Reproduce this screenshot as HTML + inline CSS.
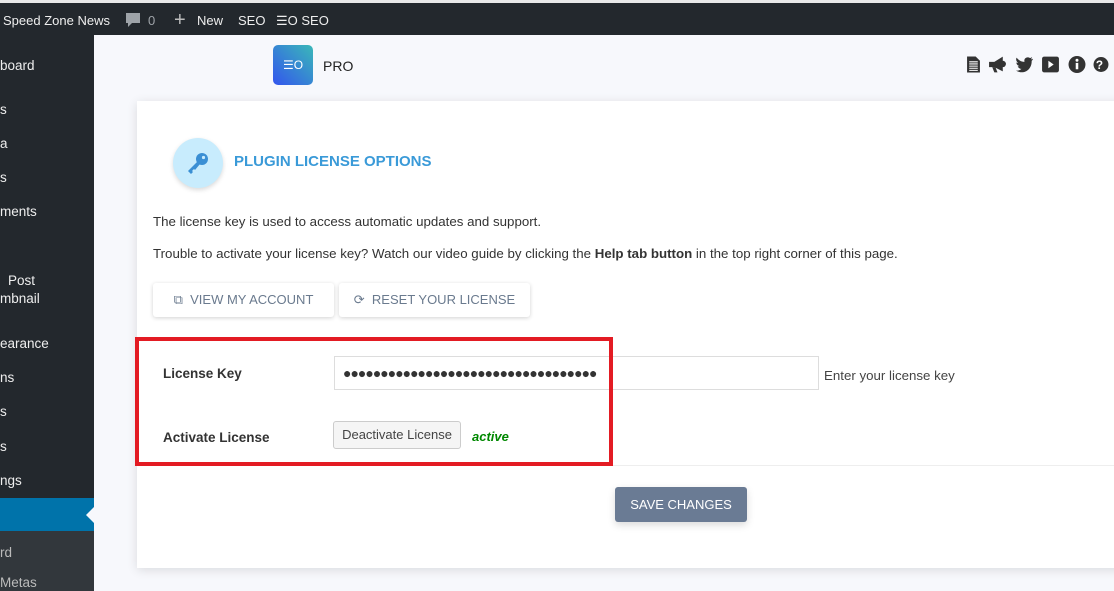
<!DOCTYPE html>
<html><head><meta charset="utf-8"><style>
*{box-sizing:border-box;margin:0;padding:0}
body{width:1114px;height:591px;overflow:hidden;background:#f7f8fc;font-family:"Liberation Sans",sans-serif;font-size:13px;color:#32373c;position:relative}
.abs{position:absolute}
#bar{left:0;top:0;width:1114px;height:35px;background:#23282d;border-top:3px solid #e8e8e8;color:#eee;font-size:13px}
#bar span{position:absolute;top:10px}
#side{left:0;top:35px;width:94px;height:556px;background:#23282d;color:#eee;font-size:13.5px}
#side div{position:absolute;left:0}
.card{left:137px;top:101px;width:990px;height:467px;background:#fff;box-shadow:0 2px 10px rgba(0,0,0,.12)}
.btn{background:#fff;box-shadow:0 1px 4px rgba(0,0,0,.18);border-radius:3px;color:#6a7a8e;font-size:13px;text-align:center;line-height:34px}
.lbl{color:#333;font-weight:bold;font-size:13.5px}
</style></head><body>
<div id="bar" class="abs">
<span style="left:3px">Speed Zone News</span>
<svg class="abs" style="left:125px;top:9px" width="16" height="16" viewBox="0 0 16 16"><path d="M1 1h14v10H7l-4 4v-4H1z" fill="#9ea3a8"/></svg>
<span style="left:148px;color:#9ea3a8">0</span>
<span style="left:174px;top:6px;font-size:20px;color:#bbb">+</span>
<span style="left:197px">New</span>
<span style="left:238px">SEO</span>
<span style="left:276px">☰O SEO</span>
</div>
<div id="side" class="abs">
<div style="top:23px">board</div>
<div style="top:67px">s</div>
<div style="top:101px">a</div>
<div style="top:135px">s</div>
<div style="top:169px">ments</div>
<div style="top:238px;left:8px">Post</div>
<div style="top:256px">mbnail</div>
<div style="top:301px">earance</div>
<div style="top:335px">ns</div>
<div style="top:369px">s</div>
<div style="top:404px">s</div>
<div style="top:438px">ngs</div>
<div style="top:463px;width:94px;height:33px;background:#0073aa"></div>
<div style="top:472px;left:86px;width:0;height:0;border-top:8px solid transparent;border-bottom:8px solid transparent;border-right:8px solid #f7f8fc"></div>
<div style="top:496px;width:94px;height:60px;background:#32373c"></div>
<div style="top:510px;color:#bbb">rd</div>
<div style="top:540px;color:#bbb">Metas</div>
</div>
<div class="abs" style="left:273px;top:45px;width:40px;height:40px;border-radius:5px;background:linear-gradient(225deg,#3ab8b8,#3355ee);color:#fff;font-size:12px;text-align:center;line-height:40px">☰O</div>
<div class="abs" style="left:323px;top:58px;font-size:14px;color:#222">PRO</div>
<div class="abs" style="left:966px;top:55px;font-size:16px;color:#333;letter-spacing:3px">
<svg width="15" height="19" viewBox="0 0 14 17"><path d="M1 1h8l4 4v11H1z" fill="#333"/><path d="M3 6h8M3 8h8M3 10h8M3 12h8M3 14h8" stroke="#fff" stroke-width="1"/></svg>
<svg width="19" height="19" viewBox="0 0 18 17"><path d="M1 6h5l8-5v14l-8-4H1z" fill="#333"/><circle cx="14" cy="8" r="3" fill="#333"/><path d="M4 11l2 5h3l-2-5" fill="#333"/></svg>
<svg width="19" height="19" viewBox="0 0 18 17"><path d="M17 3c-1 .5-1.5.5-2 .5 1-1 1-1.5 1.2-2-1 .5-1.5.8-2 .9C12 0.8 8 2 9 6 5.5 6 3 4 1.5 2 0.5 4 1.5 6 3 7c-.7 0-1.3-.2-1.700-.5 0 2 1.5 3.2 3 3.5-.6.2-1.2.2-1.7.1.5 1.5 2 2.5 3.5 2.5C4.5 14 2.5 14.5 1 14.3 8 18.5 16 14 15.8 5c.6-.5 1-1 1.2-2z" fill="#333"/></svg>
<svg width="19" height="19" viewBox="0 0 18 17"><rect x="1" y="1" width="16" height="15" rx="2" fill="#333"/><path d="M7 5l5 3.5L7 12z" fill="#fff"/></svg>
<svg width="18" height="19" viewBox="0 0 17 17"><circle cx="8.5" cy="8.5" r="8" fill="#333"/><rect x="7.3" y="7" width="2.4" height="6" fill="#fff"/><circle cx="8.5" cy="4.5" r="1.4" fill="#fff"/></svg>
<svg width="16" height="19" viewBox="0 0 15 17"><circle cx="7.5" cy="8.5" r="7" fill="#333"/><text x="7.5" y="12.5" font-size="11" font-weight="bold" fill="#fff" text-anchor="middle" font-family="Liberation Sans">?</text></svg>
</div>
<div class="card abs">
<div class="abs" style="left:36px;top:37px;width:50px;height:50px;border-radius:50%;background:#c8ecfd;box-shadow:0 2px 5px rgba(0,0,0,.15)">
<svg class="abs" style="left:12px;top:12px" width="26" height="26" viewBox="0 0 26 26"><circle cx="17" cy="9" r="6" fill="#3a8fd4"/><circle cx="18.5" cy="7.5" r="1.6" fill="#c8ecfd"/><path d="M13 11L3 21l3 3 2-2-1-1 2-2 1 1 5-6z" fill="#3a8fd4"/></svg></div>
<div class="abs" style="left:97px;top:52px;font-size:15px;font-weight:bold;color:#3a9ad8">PLUGIN LICENSE OPTIONS</div>
<div class="abs" style="left:16px;top:113px;color:#333;font-size:13.3px">The license key is used to access automatic updates and support.</div>
<div class="abs" style="left:16px;top:145px;color:#333;font-size:13.3px">Trouble to activate your license key? Watch our video guide by clicking the <b>Help tab button</b> in the top right corner of this page.</div>
<div class="abs btn" style="left:16px;top:182px;width:181px">⧉ &nbsp;VIEW MY ACCOUNT</div>
<div class="abs btn" style="left:202px;top:182px;width:191px">⟳ &nbsp;RESET YOUR LICENSE</div>
<div class="abs" style="left:0;top:364px;width:990px;height:1px;background:#eee"></div>
<div class="abs lbl" style="left:26px;top:265px">License Key</div>
<div class="abs" style="left:197px;top:255px;width:485px;height:34px;border:1px solid #ddd;font-size:14px;line-height:32px;padding-left:8px;letter-spacing:-1px;color:#333">●●●●●●●●●●●●●●●●●●●●●●●●●●●●●●●●●●</div>
<div class="abs" style="left:687px;top:267px;color:#444;font-size:13.3px">Enter your license key</div>
<div class="abs lbl" style="left:26px;top:329px">Activate License</div>
<div class="abs" style="left:196px;top:320px;width:128px;height:28px;border:1px solid #ccc;background:#f5f5f5;border-radius:3px;text-align:center;line-height:26px;color:#444">Deactivate License</div>
<div class="abs" style="left:335px;top:328px;color:#080;font-weight:bold;font-style:italic">active</div>
<div class="abs" style="left:478px;top:386px;width:132px;height:35px;background:#6a7b94;border-radius:3px;color:#fff;text-align:center;line-height:35px;box-shadow:0 3px 8px rgba(0,0,0,.15)">SAVE CHANGES</div>
</div>
<div class="abs" style="left:135px;top:337px;width:478px;height:129px;border:4px solid #e31b23"></div>
</body></html>
